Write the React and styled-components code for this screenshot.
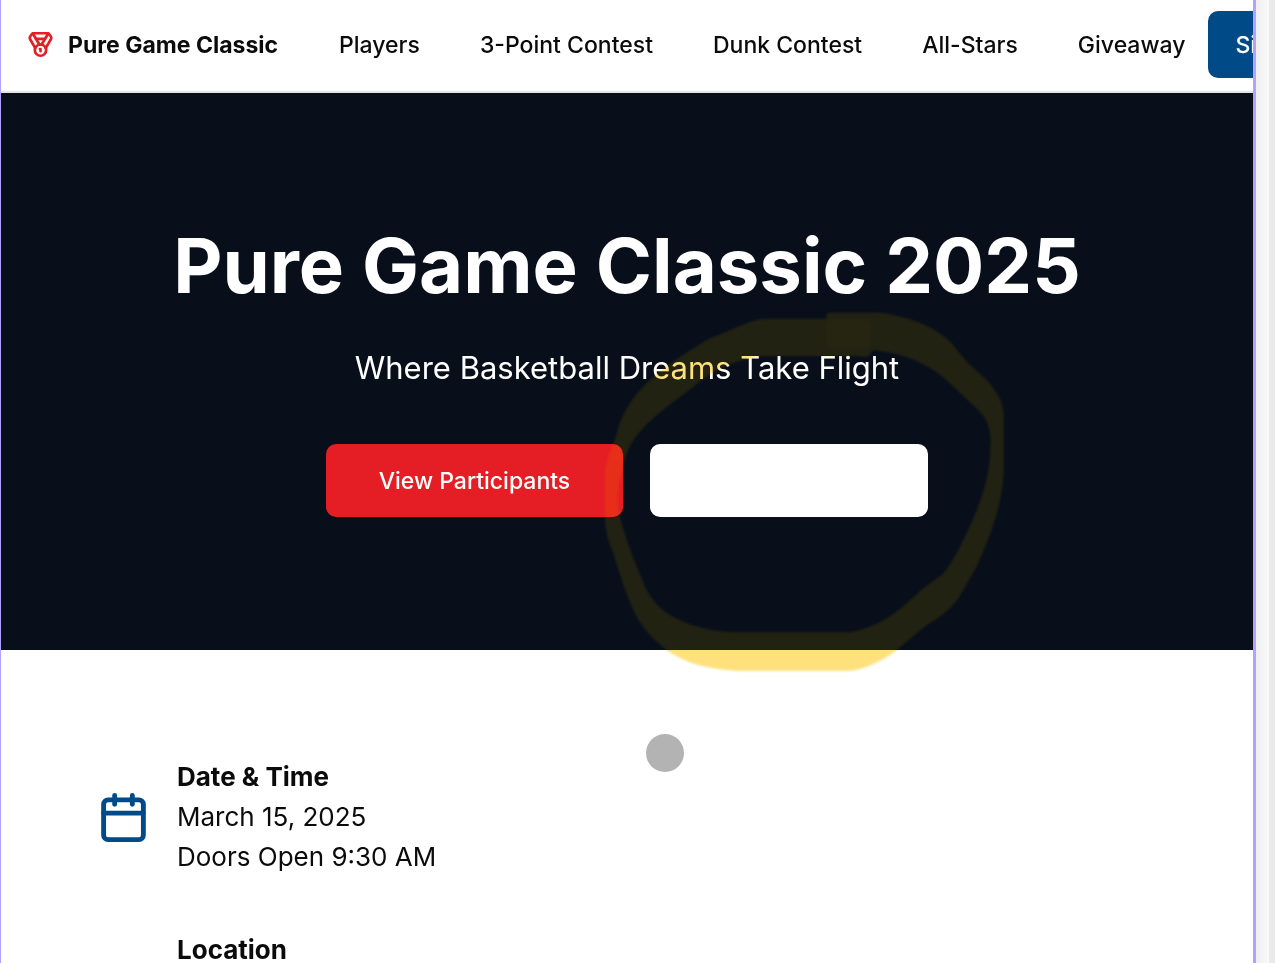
import React from "react";
import styled, { createGlobalStyle } from "styled-components";
import { Calendar, MapPin, Medal } from "lucide-react";

const GlobalStyle = createGlobalStyle`
  *, *::before, *::after { box-sizing: border-box; }
  body { margin: 0; background: #fff; }
  h1, h2, p { margin: 0; }
`;

const Screen = styled.div`
  position: relative;
  display: flex;
  height: 100vh;
  overflow: hidden;
  color: #0b0b0b;
  font-family: Inter, "Liberation Sans", sans-serif;
`;

const Frame = styled.div`
  flex: 1;
  min-width: 0;
  overflow: hidden;
  background: #fff;
  border-left: 1px solid #b1a2fb;
  border-right: 3px solid #b1a2fb;
`;

const Gutter = styled.div`
  width: 13px;
  background: linear-gradient(to right, #eeeeee, #fafafa);
`;

const ScrollTrack = styled.div`
  width: 6px;
  background: #e9eaec;
`;

const Header = styled.header`
  display: flex;
  align-items: center;
  height: 93px;
  padding: 0 0 2px 26px;
  border-bottom: 2px solid #e7e4e4;
  white-space: nowrap;
  overflow: hidden;
`;

const Brand = styled.a`
  display: flex;
  flex-shrink: 0;
  align-items: center;
  gap: 14px;
  margin-right: 61px;
  color: inherit;
  font-size: 23px;
  font-weight: 700;
  text-decoration: none;

  svg { color: #e51e25; }
`;

const Nav = styled.nav`
  display: flex;
  flex-shrink: 0;
  align-items: center;
  gap: 60px;
  margin-right: 23px;
`;

const NavLink = styled.a`
  color: inherit;
  font-size: 23px;
  font-weight: 500;
  text-decoration: none;
`;

const Button = styled.button`
  flex-shrink: 0;
  height: ${(p) => (p.$large ? 73 : 67)}px;
  min-width: ${(p) => (p.$wide ? 278 : 0)}px;
  padding: 0 ${(p) => (p.$large ? 53 : 27)}px;
  border: 0;
  border-radius: 10px;
  background: ${(p) => p.$fill};
  color: #fff;
  font-family: inherit;
  font-size: 23px;
  font-weight: 500;
  cursor: pointer;
`;

const Hero = styled.section`
  display: flex;
  flex-direction: column;
  align-items: center;
  padding: 132px 27px 133px;
  background: #080f1a;
  color: #fff;
  text-align: center;
`;

const Title = styled.h1`
  font-size: 76px;
  font-weight: 700;
  line-height: 80px;
`;

const Tagline = styled.p`
  margin: 40px 0 53px;
  font-size: 31px;
  line-height: 46px;
`;

const Actions = styled.div`
  display: flex;
  gap: 27px;
`;

const Details = styled.section`
  display: flex;
  flex-direction: column;
  gap: 53px;
  padding: 107px 96px;
`;

const Detail = styled.article`
  display: flex;
  align-items: center;
  gap: 27px;
  min-height: 120px;

  svg { flex-shrink: 0; color: #004b87; }
`;

const DetailText = styled.div`
  align-self: flex-start;
  font-size: 26px;
  line-height: 40px;
`;

const DetailTitle = styled.h2`
  font-size: inherit;
  font-weight: 700;
`;

const Marker = styled.svg`
  position: absolute;
  left: 590px;
  top: 300px;
  width: 430px;
  height: 390px;
  pointer-events: none;
  filter: blur(1px);
  mix-blend-mode: ${(p) => p.$blend};
`;

const Pointer = styled.div`
  position: absolute;
  left: 646px;
  top: 734px;
  width: 38px;
  height: 38px;
  border-radius: 50%;
  background: #b3b3b3;
`;

const LOOP =
  "M710 56V46Q710 38 722 38H870C950 48 1040 80 1085 130L1130 185L1190 240C1225 280 1240 310 1241 345V520C1235 620 1200 710 1160 800L1105 895C1080 930 1040 960 1010 975L920 1050C880 1080 830 1107 780 1112H440C380 1108 300 1100 230 1050C180 1010 150 975 130 930C100 860 85 810 70 760C50 710 45 690 45 640V530C45 490 60 450 75 420C90 350 120 300 170 250C230 190 290 160 350 120L470 70C490 62 510 57 540 56Z " +
  "M850 150C950 160 1030 200 1080 250L1165 330C1190 355 1200 380 1202 420L1200 470C1195 560 1150 660 1120 720C1100 760 1080 800 1055 825L1000 865C940 920 880 980 780 997H430C360 993 300 980 240 945C200 920 180 890 165 860C140 800 115 740 95 670C80 620 80 590 90 540C100 500 105 460 130 420C180 350 260 300 310 260C370 210 430 180 520 168H810Q835 176 843 160Z";

const links = ["Players", "3-Point Contest", "Dunk Contest", "All-Stars", "Giveaway"];

export default function App() {
  return (
    <Screen>
      <GlobalStyle />
      <Frame>
        <Header>
          <Brand href="#">
            <Medal size={27} strokeWidth={2.4} />
            Pure Game Classic
          </Brand>
          <Nav>
            {links.map((label) => (
              <NavLink href="#" key={label}>{label}</NavLink>
            ))}
          </Nav>
          <Button type="button" $fill="#004b87">Sign In</Button>
        </Header>
        <Hero>
          <Title>Pure Game Classic 2025</Title>
          <Tagline>Where Basketball Dreams Take Flight</Tagline>
          <Actions>
            <Button type="button" $large $fill="#e51e25">View Participants</Button>
            <Button type="button" $large $wide $fill="#fff" aria-label="Register" />
          </Actions>
        </Hero>
        <Details>
          <Detail>
            <Calendar size={53} strokeWidth={2.2} />
            <DetailText>
              <DetailTitle>Date &amp; Time</DetailTitle>
              <p>March 15, 2025</p>
              <p>Doors Open 9:30 AM</p>
            </DetailText>
          </Detail>
          <Detail>
            <MapPin size={53} strokeWidth={2.2} />
            <DetailText>
              <DetailTitle>Location</DetailTitle>
            </DetailText>
          </Detail>
        </Details>
      </Frame>
      <Gutter />
      <ScrollTrack />
      <Marker $blend="multiply" viewBox="0 0 1290 1170" aria-hidden="true">
        <path d={LOOP} fill="#ffe585" fillRule="evenodd" />
      </Marker>
      <Marker $blend="normal" viewBox="0 0 1290 1170" aria-hidden="true">
        <path d={LOOP} fill="#f5c53c" fillOpacity="0.11" fillRule="evenodd" />
        <rect x="710" y="60" width="132" height="86" rx="14" fill="#ffd000" fillOpacity="0.02" />
      </Marker>
      <Pointer />
    </Screen>
  );
}
